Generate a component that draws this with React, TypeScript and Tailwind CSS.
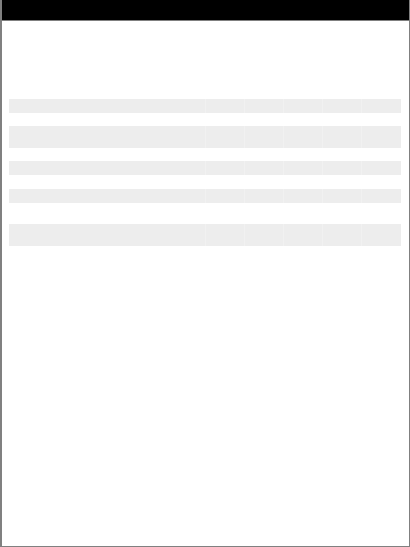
import React from "react";

const rows = [
  { h: "h-[14px]", mt: "mt-[78px]" },
  { h: "h-[22px]", mt: "mt-[13px]" },
  { h: "h-[14px]", mt: "mt-[13px]" },
  { h: "h-[14px]", mt: "mt-[14px]" },
  { h: "h-[22px]", mt: "mt-[21px]" },
];

const SkeletonRow = ({ h, mt }: { h: string; mt: string }) => (
  <div className={`flex ${mt} ${h}`}>
    <div className="flex-1 bg-[#ededed]" />
    {[0, 1, 2, 3, 4].map((i) => (
      <div key={i} className={`${i === 4 ? "w-[40px]" : "w-[39px]"} bg-[#ededed] border-l border-[#f1f1f1]`} />
    ))}
  </div>
);

export default function App() {
  return (
    <div className="w-[410px] h-[547px] bg-white border-l-2 border-r border-b border-[#808080] flex flex-col font-['Liberation_Sans',sans-serif]">
      <div className="h-[21px] bg-black border-b border-[#808080] shrink-0" />
      <div className="pl-[7px] pr-[8px]">
        {rows.map((r, i) => (
          <SkeletonRow key={i} h={r.h} mt={r.mt} />
        ))}
      </div>
    </div>
  );
}
